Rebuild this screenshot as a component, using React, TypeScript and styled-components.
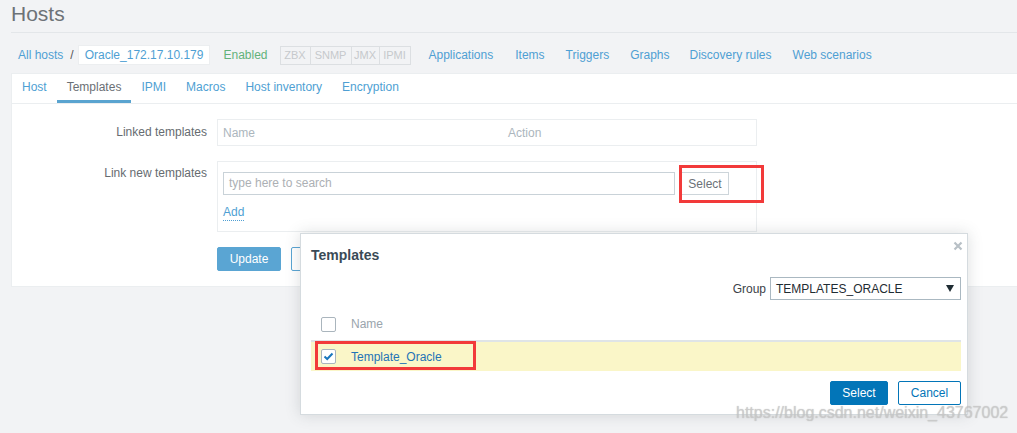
import React from "react";
import styled, { createGlobalStyle } from "styled-components";

const GlobalStyle = createGlobalStyle`
  html, body {
    margin: 0;
    padding: 0;
    background: #f2f3f5;
    font-family: "Liberation Sans", Arial, sans-serif;
    font-size: 12px;
  }
  * {
    box-sizing: border-box;
  }
`;

const LINK = "#4f9fd3";
const DARK_BLUE = "#0275b8";

const Page = styled.div`
  position: relative;
  width: 1017px;
  height: 433px;
  overflow: hidden;
  padding-left: 11px;
`;

const Header = styled.header`
  height: 33px;
  border-bottom: 1px solid #e3e6e9;
`;

const Title = styled.h1`
  margin: 0;
  font-size: 21px;
  font-weight: 400;
  line-height: 27px;
  color: #6d7277;
`;

const Nav = styled.nav`
  height: 40px;
  padding: 4px 0 0 7px;
  display: flex;
  align-items: center;
`;

const NavLink = styled.a<{ $gap?: number }>`
  color: ${LINK};
  text-decoration: none;
  margin-left: ${(p) => p.$gap ?? 0}px;
  white-space: nowrap;
`;

const Slash = styled.span`
  color: #555;
  margin: 0 4px 0 7px;
`;

const HostChip = styled.span`
  height: 20px;
  line-height: 19px;
  padding: 0 6px;
  background: #fff;
  border: 1px solid #eceef0;
  color: ${LINK};
`;

const Enabled = styled.span`
  color: #62b27a;
  margin-left: 13px;
`;

const StatusGroup = styled.span`
  display: flex;
  margin-left: 12px;
  border: 1px solid #dcdfe2;
  height: 19px;
`;

const StatusItem = styled.span<{ $w: number }>`
  width: ${(p) => p.$w}px;
  text-align: center;
  line-height: 17px;
  font-size: 11px;
  color: #c6c9cc;
  & + & {
    border-left: 1px solid #dcdfe2;
  }
`;

const Panel = styled.section`
  background: #fff;
  border: 1px solid #ebeef0;
  border-right: none;
  height: 214px;
`;

const Tabs = styled.ul`
  list-style: none;
  margin: 0;
  padding: 0;
  display: flex;
  height: 30px;
  border-bottom: 1px solid #ebeef0;
`;

const Tab = styled.li<{ $active?: boolean }>`
  padding: 1px 10px 0;
  line-height: 25px;
  border-bottom: 3px solid ${(p) => (p.$active ? "#5aa4d0" : "transparent")};
  color: ${(p) => (p.$active ? "#6b7075" : LINK)};
`;

const Form = styled.div`
  padding: 15px 0 15px;
  display: grid;
  grid-template-columns: 195px 540px;
  column-gap: 10px;
  row-gap: 15px;
`;

const Label = styled.label<{ $top?: number }>`
  text-align: right;
  color: #666b70;
  line-height: 16px;
  padding-top: ${(p) => p.$top ?? 0}px;
`;

const TableBox = styled.div`
  height: 27px;
  border: 1px solid #ebeef0;
  display: grid;
  grid-template-columns: 285px 1fr;
  align-items: center;
  padding-left: 5px;
  color: #acb6bd;
`;

const FieldBox = styled.div`
  border: 1px solid #ebeef0;
  padding: 10px 5px 10px;
`;

const SearchRow = styled.div`
  display: flex;
  align-items: center;
`;

const SearchInput = styled.div`
  width: 452px;
  height: 23px;
  border: 1px solid #c9d2d8;
  color: #acb0b4;
  line-height: 21px;
  padding-left: 5px;
`;

const Highlighted = styled.span`
  position: relative;
  margin-left: 6px;
  display: flex;
`;

const RedFrame = styled.span<{ $l: number; $t: number; $w: number; $h: number }>`
  position: absolute;
  left: ${(p) => p.$l}px;
  top: ${(p) => p.$t}px;
  width: ${(p) => p.$w}px;
  height: ${(p) => p.$h}px;
  border: 3px solid #f23a3a;
  pointer-events: none;
`;

const GreyButton = styled.button`
  width: 48px;
  height: 23px;
  border: 1px solid #cdd5da;
  background: #fff;
  color: #6b7177;
  font: inherit;
  padding: 0;
`;

const AddLink = styled.a`
  display: inline-block;
  margin-top: 10px;
  color: ${LINK};
  line-height: 15px;
  border-bottom: 1px dotted ${LINK};
`;

const Buttons = styled.div`
  grid-column: 2;
  display: flex;
  gap: 10px;
`;

const Button = styled.button<{ $outline?: boolean; $color: string; $w: number }>`
  width: ${(p) => p.$w}px;
  height: 24px;
  border-radius: 2px;
  font: inherit;
  padding: 0;
  border: 1px solid ${(p) => p.$color};
  background: ${(p) => (p.$outline ? "#fff" : p.$color)};
  color: ${(p) => (p.$outline ? p.$color : "#fff")};
`;

const Modal = styled.div`
  position: absolute;
  left: 300px;
  top: 233px;
  width: 668px;
  height: 182px;
  background: #fff;
  border: 1px solid #d5dbdf;
  box-shadow: 0 0 14px rgba(60, 70, 80, 0.18);
  padding: 12px 6px 10px 10px;
`;

const ModalTitle = styled.h3`
  margin: 0;
  font-size: 14px;
  font-weight: 700;
  line-height: 18px;
  color: #3a4a56;
`;

const Close = styled.span`
  position: absolute;
  right: 4px;
  top: 7px;
  display: flex;
`;

const GroupRow = styled.div`
  margin-top: 13px;
  display: flex;
  justify-content: flex-end;
  align-items: center;
  gap: 4px;
  color: #3c4248;
`;

const Select = styled.div`
  width: 191px;
  height: 23px;
  border: 1px solid #aab8c1;
  display: flex;
  align-items: center;
  justify-content: space-between;
  padding: 0 6px 0 5px;
  color: #1f2c33;
`;

const Row = styled.div<{ $head?: boolean }>`
  position: relative;
  display: grid;
  grid-template-columns: 40px 1fr;
  align-items: center;
  height: ${(p) => (p.$head ? 34 : 29)}px;
  background: ${(p) => (p.$head ? "#fff" : "#faf6c8")};
  border-bottom: ${(p) => (p.$head ? "2px solid #dfe4e7" : "none")};
  color: ${(p) => (p.$head ? "#9aa5ad" : "#1f74b7")};
  margin-top: ${(p) => (p.$head ? 8 : 0)}px;
`;

const Check = styled.span`
  margin-left: 10px;
  width: 15px;
  height: 15px;
  border: 1px solid #aab5bd;
  border-radius: 2px;
  background: #fff;
  display: flex;
  align-items: center;
  justify-content: center;
`;

const ModalFooter = styled.div`
  margin-top: 10px;
  display: flex;
  justify-content: flex-end;
  gap: 10px;
`;

const Watermark = styled.span`
  position: absolute;
  left: 736px;
  top: 404px;
  font-size: 16px;
  color: rgba(205, 205, 205, 0.75);
  text-shadow: 0 0 1px rgba(150, 150, 150, 0.6);
  white-space: nowrap;
`;

export default function App() {
  return (
    <Page>
      <GlobalStyle />
      <Header>
        <Title>Hosts</Title>
      </Header>
      <Nav>
        <NavLink>All hosts</NavLink>
        <Slash>/</Slash>
        <HostChip>Oracle_172.17.10.179</HostChip>
        <Enabled>Enabled</Enabled>
        <StatusGroup>
          <StatusItem $w={29}>ZBX</StatusItem>
          <StatusItem $w={41}>SNMP</StatusItem>
          <StatusItem $w={28}>JMX</StatusItem>
          <StatusItem $w={31}>IPMI</StatusItem>
        </StatusGroup>
        <NavLink $gap={18}>Applications</NavLink>
        <NavLink $gap={22}>Items</NavLink>
        <NavLink $gap={21}>Triggers</NavLink>
        <NavLink $gap={21}>Graphs</NavLink>
        <NavLink $gap={20}>Discovery rules</NavLink>
        <NavLink $gap={21}>Web scenarios</NavLink>
      </Nav>
      <Panel>
        <Tabs>
          <Tab>Host</Tab>
          <Tab $active>Templates</Tab>
          <Tab>IPMI</Tab>
          <Tab>Macros</Tab>
          <Tab>Host inventory</Tab>
          <Tab>Encryption</Tab>
        </Tabs>
        <Form>
          <Label $top={5}>Linked templates</Label>
          <TableBox>
            <span>Name</span>
            <span>Action</span>
          </TableBox>
          <Label $top={4}>Link new templates</Label>
          <FieldBox>
            <SearchRow>
              <SearchInput>type here to search</SearchInput>
              <Highlighted>
                <GreyButton>Select</GreyButton>
                <RedFrame $l={-2} $t={-7} $w={85} $h={38} />
              </Highlighted>
            </SearchRow>
            <AddLink>Add</AddLink>
          </FieldBox>
          <Buttons>
            <Button $color="#5aa5d3" $w={64}>Update</Button>
            {/* hidden under the dialog; only its left edge shows */}
            <Button $color="#5aa5d3" $w={63} $outline aria-label="Cancel" />
          </Buttons>
        </Form>
      </Panel>

      <Modal>
        <ModalTitle>Templates</ModalTitle>
        <Close>
          <svg width="10" height="10" viewBox="0 0 10 10">
            <path d="M1.5 1.5 L8.5 8.5 M8.5 1.5 L1.5 8.5" stroke="#b8c0c6" strokeWidth="2.2" />
          </svg>
        </Close>
        <GroupRow>
          <span>Group</span>
          <Select>
            <span>TEMPLATES_ORACLE</span>
            <svg width="8" height="7" viewBox="0 0 8 7">
              <path d="M0 0 H8 L4 7 Z" fill="#1f2c33" />
            </svg>
          </Select>
        </GroupRow>
        <Row $head>
          <Check />
          <span>Name</span>
        </Row>
        <Row>
          <Check>
            <svg width="11" height="9" viewBox="0 0 11 9">
              <path d="M1.5 4.5 L4.2 7 L9.5 1.5" stroke="#1a77bd" strokeWidth="2" fill="none" />
            </svg>
          </Check>
          <span>Template_Oracle</span>
          <RedFrame $l={4} $t={-1} $w={161} $h={29} />
        </Row>
        <ModalFooter>
          <Button $color={DARK_BLUE} $w={58}>Select</Button>
          <Button $color={DARK_BLUE} $w={63} $outline>Cancel</Button>
        </ModalFooter>
      </Modal>
      <Watermark>https://blog.csdn.net/weixin_43767002</Watermark>
    </Page>
  );
}
